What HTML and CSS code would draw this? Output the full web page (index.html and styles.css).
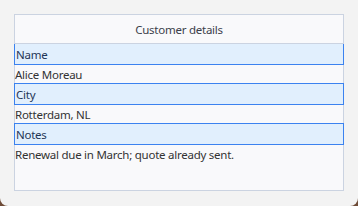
FILE: index.html
```html
<!DOCTYPE html>
<html lang="en">
<head>
  <meta charset="UTF-8" />
  <title>Customer details</title>
  <link rel="stylesheet" href="styles.css">
</head>
<body>

  <div class="window">
    <div class="panel">
      <div class="panel-header">Customer details</div>

      <div class="field-label first">Name</div>
      <div class="field-value">Alice Moreau</div>

      <div class="field-label">City</div>
      <div class="field-value">Rotterdam, NL</div>

      <div class="field-label">Notes</div>
      <div class="field-value">Renewal due in March; quote already sent.</div>
    </div>
  </div>

</body>
</html>
```

FILE: styles.css
```css
html {
  background: #6e4b37;
}

body {
  margin: 0;
  font-family: 'Noto Sans', 'Open Sans', sans-serif;
  font-size: 11.5px;
  letter-spacing: -0.25px;
}

.window {
  height: 206px;
  box-sizing: border-box;
  padding: 14px 14px 15px 14px;
  background: #f3f3f3;
  border-radius: 0 0 8px 8px;
}

.panel {
  height: 100%;
  box-sizing: border-box;
  background: #f9f9fb;
  border: 1px solid #cbd3e1;
}

.panel-header {
  height: 28px;
  line-height: 30px;
  text-align: center;
  color: #3b404a;
  border-bottom: 1px solid #cbd3e1;
}

.field-label {
  margin: 0 -1px;
  padding-left: 1px;
  height: 20px;
  line-height: 21px;
  background: #e1effd;
  border: 1px solid #3b82f0;
  color: #1f3556;
}

.field-label.first {
  border-top: none;
}

.field-value {
  line-height: 19px;
  height: 18px;
  color: #333;
}
```
